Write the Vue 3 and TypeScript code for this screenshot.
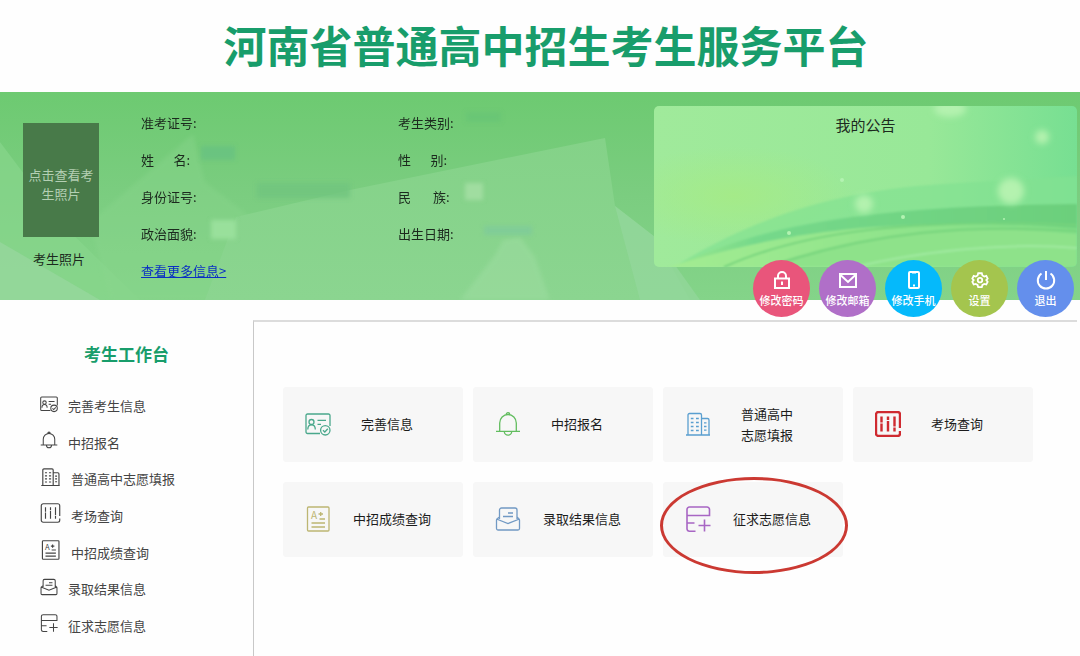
<script setup lang="ts">
interface MenuItem {
  icon: string
  label: string
  size: 'small' | 'large'
}

interface Card {
  icon: string
  lines: string[]
  tone: string
  marked?: boolean
}

const leftFields: string[] = ['准考证号:', '姓\u2003\u2002名:', '身份证号:', '政治面貌:']
const rightFields: string[] = ['考生类别:', '性\u2003\u2002别:', '民\u2003\u2002\u2009族:', '出生日期:']

const actions = [
  { icon: 'lock', label: '修改密码', tone: 'rose' },
  { icon: 'mail', label: '修改邮箱', tone: 'violet' },
  { icon: 'phone', label: '修改手机', tone: 'sky' },
  { icon: 'gear', label: '设置', tone: 'olive' },
  { icon: 'power', label: '退出', tone: 'blue' },
]

const menu: MenuItem[] = [
  { icon: 'profile', label: '完善考生信息', size: 'small' },
  { icon: 'bell', label: '中招报名', size: 'small' },
  { icon: 'building', label: '普通高中志愿填报', size: 'large' },
  { icon: 'room', label: '考场查询', size: 'large' },
  { icon: 'score', label: '中招成绩查询', size: 'large' },
  { icon: 'letter', label: '录取结果信息', size: 'small' },
  { icon: 'form', label: '征求志愿信息', size: 'small' },
]

const cards: Card[] = [
  { icon: 'profile', lines: ['完善信息'], tone: 'teal' },
  { icon: 'bell', lines: ['中招报名'], tone: 'green' },
  { icon: 'building', lines: ['普通高中', '志愿填报'], tone: 'azure' },
  { icon: 'room', lines: ['考场查询'], tone: 'red' },
  { icon: 'score', lines: ['中招成绩查询'], tone: 'khaki' },
  { icon: 'letter', lines: ['录取结果信息'], tone: 'steel' },
  { icon: 'form', lines: ['征求志愿信息'], tone: 'purple', marked: true },
]
</script>

<template>
  <div class="page">
    <svg class="sprite" aria-hidden="true">
      <symbol id="profile" viewBox="0 0 26 26">
        <path d="M15 22.5H2.5A1.5 1.5 0 0 1 1 21V4.500A1.500 1.500 0 0 1 2.500 3H23.500A1.500 1.500 0 0 1 25 4.500V15" />
        <circle cx="6.500" cy="11" r="2.500" />
        <path d="M2.800 18.500C2.800 15 4.500 13.800 6.500 13.800S10.300 15 10.300 18.500M12.500 9.300H21M12.500 13.300H16" />
        <circle cx="20.300" cy="19.300" r="4.700" />
        <path d="M18 19.300L19.800 21L22.800 17.800" />
      </symbol>
      <symbol id="bell" viewBox="0 0 26 26">
        <path d="M1 20.300H25M4.700 20.300V12A8.300 8.500 0 0 1 21.300 12V20.300M11.300 3.300A1.700 1.700 0 0 1 14.700 3.300M9.300 20.500A3.700 3.700 0 0 0 16.700 20.500" />
      </symbol>
      <symbol id="building" viewBox="0 0 26 26">
        <path d="M1 24H25M3 24V4A1.500 1.500 0 0 1 4.500 2.500H15A1.500 1.500 0 0 1 16.500 4V24M16.500 7.500H22.500A1.500 1.500 0 0 1 24 9V24M5.800 7.500H8.500M11 7.500H13.800M5.800 11.500H8.500M11 11.500H13.800M5.800 15.500H8.500M11 15.500H13.800M5.800 19.500H8.500M11 19.500H13.800M19 11.800H21.500M19 15.500H21.500M19 19.200H21.500" />
      </symbol>
      <symbol id="room" viewBox="0 0 26 26">
        <path d="M25 17V3.500A2.500 2.500 0 0 0 22.500 1H3.500A2.500 2.500 0 0 0 1 3.500V22.500A2.500 2.500 0 0 0 3.500 25H22.500A2.500 2.500 0 0 0 25 22.500V20M6.500 5.500V11.500M6.500 12.500V20.500M13 5.500V9M13 10V20.500M19.500 5.500V15.500M19.500 16.500V20.500" />
      </symbol>
      <symbol id="score" viewBox="0 0 26 26">
        <rect x="2.500" y="1" width="21.500" height="24" rx="1" />
        <text x="6" y="13" class="grade">A</text>
        <path d="M13.500 8H18M15.700 6V10M14.500 13H20M6.500 17H20M6.500 21H20" />
      </symbol>
      <symbol id="letter" viewBox="0 0 26 26">
        <path d="M4.500 13V4A2 2 0 0 1 6.500 2H20A2 2 0 0 1 22 4V13M13 7H18M8 10.500H18M4.500 11L2.500 12.500A2 2 0 0 0 1.500 14V22.500A1.500 1.500 0 0 0 3 24H23A1.500 1.500 0 0 0 24.500 22.500V14A2 2 0 0 0 23.500 12.500L22 11M1.500 13L13 17.500L24.500 13" />
      </symbol>
      <symbol id="form" viewBox="0 0 26 26">
        <path d="M2 9.500V3.500A2.500 2.500 0 0 1 4.500 1H22A2.500 2.500 0 0 1 24.500 3.500V9.500H2V23A2.500 2.500 0 0 0 4.500 25.200H10.500M2 17H9.500M13.500 19.500H25.500M19.500 13.500V25.500" />
      </symbol>
      <symbol id="lock" viewBox="0 0 20 20">
        <path d="M3 8.500H17V18H3ZM6 8.500V6A4 4 0 0 1 14 6V8.500M10 11.500V15" />
      </symbol>
      <symbol id="mail" viewBox="0 0 20 20">
        <path d="M2 4H18V17H2ZM2.500 5L10 12L17.500 5" />
      </symbol>
      <symbol id="phone" viewBox="0 0 20 20">
        <path d="M6 2H14A1 1 0 0 1 15 3V17A1 1 0 0 1 14 18H6A1 1 0 0 1 5 17V3A1 1 0 0 1 6 2ZM8 2.500H12M9 15.500H11" />
      </symbol>
      <symbol id="gear" viewBox="0 0 20 20">
        <path d="M8 2.500H12L12.700 5L14.800 6.200L17 5.500L18.500 8.500L17 10L18.500 12L17 15L14.800 14.300L12.700 15.500L12 18H8L7.300 15.500L5.200 14.300L3 15L1.500 12L3 10L1.500 8.500L3 5.500L5.200 6.200L7.300 5Z" />
        <circle cx="10" cy="10.200" r="2.500" />
      </symbol>
      <symbol id="power" viewBox="0 0 20 20">
        <path d="M5.500 3.500A8.200 8.200 0 1 0 14.500 3.500M10 1V10" />
      </symbol>
    </svg>

    <header class="header">
      <h1>河南省普通高中招生考生服务平台</h1>
    </header>

    <section class="banner">
      <svg class="scenery" viewBox="0 0 1080 208" preserveAspectRatio="none" aria-hidden="true">
        <defs>
          <linearGradient id="sheet" x1="0" y1="0" x2="0" y2="1">
            <stop offset="0" stop-color="#84d288" />
            <stop offset="1" stop-color="#8bd590" />
          </linearGradient>
          <filter id="haze"><feGaussianBlur stdDeviation="2" /></filter>
        </defs>
        <path d="M0 50L60 130L140 208H0Z" fill="#88d58c" opacity=".7" />
        <path d="M90 130L193 42L205 90L270 140L240 208H110Z" fill="#8ad68d" opacity=".4" filter="url(#haze)" />
        <path d="M0 150L100 208H0Z" fill="#98d79f" opacity=".7" />
        <path d="M205 208L236 125L350 98L605 46L615 114L655 145L690 208Z" fill="url(#sheet)" />
        <path d="M615 114L655 145L700 208H640Z" fill="#94d79c" opacity=".7" />
        <path d="M460 208L495 163L503 148L520 145L535 165L550 208Z" fill="#9adb9d" opacity=".7" filter="url(#haze)" />
        <g filter="url(#haze)">
          <rect x="201" y="54" width="34" height="14" fill="#64be84" opacity=".6" />
          <rect x="257" y="91" width="93" height="15" fill="#70c47e" opacity=".8" />
          <rect x="211" y="128" width="25" height="19" fill="#99e09b" />
          <rect x="466" y="20" width="35" height="10" fill="#67c575" opacity=".7" />
          <rect x="465" y="91" width="18" height="17" fill="#a0dda0" />
          <rect x="484" y="134" width="48" height="9" fill="#7ecb9a" opacity=".8" />
        </g>
      </svg>

      <div class="portrait">
        <button type="button" class="photo">点击查看考生照片</button>
        <span class="caption">考生照片</span>
      </div>

      <div class="fields fields-left">
        <span v-for="field in leftFields" :key="field">{{ field }}</span>
        <a href="#more">查看更多信息&gt;</a>
      </div>
      <div class="fields fields-right">
        <span v-for="field in rightFields" :key="field">{{ field }}</span>
      </div>

      <section class="notice">
        <svg class="scenery" viewBox="0 0 423 161" preserveAspectRatio="none" aria-hidden="true">
          <defs>
            <linearGradient id="sky" x1="0" y1="0" x2="1" y2="0">
              <stop offset="0" stop-color="#a0ea9b" />
              <stop offset=".65" stop-color="#98e898" />
              <stop offset="1" stop-color="#77df92" />
            </linearGradient>
            <radialGradient id="sun">
              <stop offset="0" stop-color="#a6eb84" />
              <stop offset="1" stop-color="#a6eb84" stop-opacity="0" />
            </radialGradient>
            <linearGradient id="wave" x1="0" y1="0" x2="1" y2="0">
              <stop offset="0" stop-color="#9be88d" />
              <stop offset=".2" stop-color="#76d98b" />
              <stop offset="1" stop-color="#6ccf7c" />
            </linearGradient>
            <linearGradient id="meadow" x1="0" y1="0" x2="1" y2="0">
              <stop offset="0" stop-color="#a3ec92" />
              <stop offset="1" stop-color="#80dd86" />
            </linearGradient>
            <filter id="glow" x="-1" y="-1" width="3" height="3"><feGaussianBlur stdDeviation="3" /></filter>
            <filter id="soft"><feGaussianBlur stdDeviation="1" /></filter>
          </defs>
          <rect width="423" height="161" fill="url(#sky)" />
          <ellipse cx="80" cy="90" rx="120" ry="50" fill="url(#sun)" opacity=".8" />
          <g filter="url(#soft)">
            <path d="M20 161C90 118 170 85 290 78L423 70V161Z" fill="#82e191" opacity=".7" />
            <path d="M20 161C100 122 200 100 423 98V161Z" fill="url(#wave)" />
            <path d="M15 161C110 132 210 108 423 122V161Z" fill="url(#meadow)" />
            <path d="M70 161C150 125 260 112 423 119" fill="none" stroke="#76d47d" stroke-width="2" />
            <path d="M110 161C200 128 290 116 423 128V161Z" fill="#8ee28a" />
            <path d="M120 159C220 126 310 118 423 125" fill="none" stroke="#76d47d" stroke-width="2" />
            <path d="M200 161C270 145 350 136 423 142" fill="none" stroke="#a0eaa0" stroke-width="2" />
          </g>
          <g fill="#b4f2af" filter="url(#glow)">
            <ellipse cx="296" cy="3" rx="16" ry="8" />
            <circle cx="388" cy="31" r="7" />
            <circle cx="357" cy="85" r="13" />
            <circle cx="210" cy="98" r="9" />
          </g>
          <g fill="#b3f2b2">
            <circle cx="188" cy="74" r="2" />
            <circle cx="249" cy="111" r="2" />
            <circle cx="135" cy="127" r="2" />
            <circle cx="350" cy="113" r="1" />
          </g>
        </svg>
        <h2>我的公告</h2>
      </section>

      <nav class="actions" aria-label="账户操作">
        <button v-for="action in actions" :key="action.icon" type="button" :class="['action', action.tone]">
          <svg class="action-icon" aria-hidden="true"><use :href="'#' + action.icon" /></svg>
          <span>{{ action.label }}</span>
        </button>
      </nav>
    </section>

    <div class="body">
      <aside class="sidebar">
        <h2>考生工作台</h2>
        <nav class="menu">
          <a v-for="item in menu" :key="item.icon" :href="'#' + item.icon + '-page'">
            <svg :class="['menu-icon', item.size]" aria-hidden="true"><use :href="'#' + item.icon" /></svg>
            <span>{{ item.label }}</span>
          </a>
        </nav>
      </aside>

      <main class="content">
        <div class="cards">
          <button v-for="card in cards" :key="card.icon" type="button" class="card">
            <svg :class="['card-icon', card.tone]" aria-hidden="true"><use :href="'#' + card.icon" /></svg>
            <span :class="['card-label', { long: card.lines[0].length > 4 }]">
              <span v-for="line in card.lines" :key="line">{{ line }}</span>
            </span>
            <span v-if="card.marked" class="ring"></span>
          </button>
        </div>
      </main>
    </div>
  </div>
</template>

<style>
body {
  margin: 0;
  background: #fefefe;
}
</style>

<style scoped>
* {
  box-sizing: border-box;
}

.page {
  display: flex;
  flex-direction: column;
  min-height: 100vh;
  font-family: "Noto Sans CJK SC", sans-serif;
  font-size: 13px;
  line-height: 20px;
  color: #1c2a1e;
}

button {
  padding: 0;
  border: 0;
  font: inherit;
  color: inherit;
  cursor: pointer;
}

h1,
h2 {
  margin: 0;
}

.sprite {
  display: none;
}

.grade {
  font-size: 10px;
  fill: currentColor;
  stroke: none;
}

.header {
  display: flex;
  justify-content: center;
  height: 92px;
  padding: 14px 0 0 12px;
}

.header h1 {
  font-size: 43px;
  line-height: 60px;
  font-weight: 700;
  color: #189d6b;
  white-space: nowrap;
}

.banner {
  position: relative;
  display: flex;
  align-items: flex-start;
  height: 208px;
  padding-right: 3px;
  background: linear-gradient(#6dca71, #7bcd80 50%, #84d489);
}

.scenery {
  position: absolute;
  inset: 0;
  width: 100%;
  height: 100%;
}

.portrait {
  position: relative;
  display: flex;
  flex-direction: column;
  align-items: center;
  gap: 12px;
  width: 76px;
  margin: 31px 42px 0 23px;
}

.photo {
  width: 76px;
  height: 114px;
  padding: 8px 5px 0;
  background: #487a49;
  color: #b4cfb3;
  line-height: 19px;
}

.caption {
  margin-right: 4px;
}

.fields {
  position: relative;
  display: flex;
  flex-direction: column;
  align-items: flex-start;
  gap: 17px;
  padding-top: 21px;
}

.fields-left {
  width: 257px;
}

.fields-right {
  width: 256px;
}

.fields a {
  color: #0a2fc4;
}

.notice {
  position: relative;
  flex: 1;
  height: 161px;
  margin-top: 14px;
  border-radius: 5px;
  overflow: hidden;
}

.notice h2 {
  position: relative;
  padding-top: 9px;
  font-size: 15px;
  font-weight: 400;
  text-align: center;
}

.actions {
  position: absolute;
  right: 6px;
  bottom: -17px;
  display: flex;
  gap: 9px;
}

.action {
  display: flex;
  flex-direction: column;
  align-items: center;
  gap: 2px;
  width: 57px;
  height: 57px;
  padding-top: 10px;
  border-radius: 50%;
  color: #fff;
  font-size: 11px;
  line-height: 16px;
  font-weight: 500;
  white-space: nowrap;
}

.action-icon {
  width: 20px;
  height: 20px;
  fill: none;
  stroke: currentColor;
  stroke-width: 2;
}

.rose { background: #e9557b; }
.violet { background: #b06fc8; }
.sky { background: #05b9fb; }
.olive { background: #a4c54e; }
.blue { background: #648fec; }

.olive svg {
  padding: 1px;
}

.body {
  display: flex;
  flex: 1;
  padding: 20px 3px 0 0;
}

.sidebar {
  width: 253px;
  padding-top: 22px;
}

.sidebar h2 {
  font-size: 17px;
  line-height: 24px;
  color: #189d6b;
  text-align: center;
}

.menu {
  display: grid;
  grid-auto-rows: 1fr;
  min-height: 256px;
  margin: 22px 0 10px 40px;
}

.menu a {
  display: flex;
  align-items: center;
  gap: 10px;
  color: #444;
  text-decoration: none;
}

.menu-icon {
  margin-bottom: 5px;
  fill: none;
  stroke: currentColor;
  stroke-width: 1.5;
}

.small {
  width: 18px;
  height: 18px;
}

.large {
  width: 21px;
  height: 20px;
}

.content {
  flex: 1;
  padding: 65px 44px 40px 29px;
  border-top: 2px solid #dcdcdc;
  border-left: 1px solid #c8c8c8;
}

.cards {
  display: grid;
  grid-template-columns: repeat(4, 1fr);
  gap: 20px 10px;
}

.card {
  position: relative;
  display: flex;
  align-items: center;
  height: 75px;
  padding: 0 0 2px 22px;
  border-radius: 3px;
  background: #f7f7f7;
  color: #1c1c1c;
  text-align: left;
}

.card-icon {
  width: 26px;
  height: 26px;
  fill: none;
  stroke: currentColor;
  stroke-width: 1.3;
}

.card-label {
  display: flex;
  flex-direction: column;
  margin-left: 30px;
  line-height: 21px;
  white-space: nowrap;
}

.card-label.long {
  margin-left: 22px;
}

.teal { color: #4aa88c; }
.green { color: #62bd5f; }
.azure { color: #5a9fd0; }
.red { color: #cf2a30; stroke-width: 2.4; }
.khaki { color: #bdb673; }
.steel { color: #7199c4; }
.purple { color: #a866c4; stroke-width: 1.6; }

.ring {
  position: absolute;
  top: -5px;
  left: -3px;
  width: 188px;
  height: 97px;
  border: 3px solid #cb3932;
  border-radius: 50%;
}
</style>
